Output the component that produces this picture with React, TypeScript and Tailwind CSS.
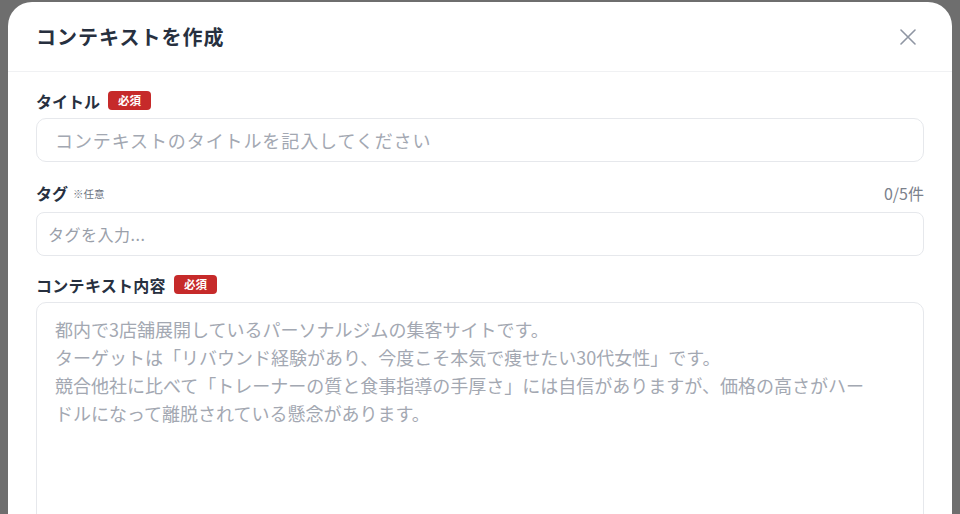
import { useState } from 'react';

const MAX_TAGS = 5;

const CONTENT_PLACEHOLDER =
  '都内で3店舗展開しているパーソナルジムの集客サイトです。\n' +
  'ターゲットは「リバウンド経験があり、今度こそ本気で痩せたい30代女性」です。\n' +
  '競合他社に比べて「トレーナーの質と食事指導の手厚さ」には自信がありますが、価格の高さがハー\n' +
  'ドルになって離脱されている懸念があります。';

function RequiredBadge() {
  return (
    <span className="ml-[8px] inline-flex h-[19px] items-center rounded-[4px] bg-[#c62a2a] px-[10px] text-[11.5px] font-bold leading-none text-white">
      必須
    </span>
  );
}

function CloseIcon() {
  return (
    <svg width="16" height="16" viewBox="0 0 16 16" fill="none" stroke="#8f96a3" strokeWidth="1.6" strokeLinecap="round">
      <path d="M1 1L15 15M15 1L1 15" />
    </svg>
  );
}

export default function App() {
  const [title, setTitle] = useState('');
  const [tagInput, setTagInput] = useState('');
  const [tags] = useState<string[]>([]);
  const [content, setContent] = useState('');

  return (
    <div
      className="h-[514px] w-[960px] overflow-hidden bg-[#6e6e6e] pl-[8px] pr-[8px] pt-[2px]"
      style={{ fontFamily: '"Noto Sans CJK JP", "Noto Sans", sans-serif' }}
    >
      <div className="flex h-full flex-col rounded-t-[24px] bg-white">
        {/* Header */}
        <div className="flex h-[70px] shrink-0 items-center justify-between border-b border-[#f0f1f3] pl-[28px] pr-[28px]">
          <h2 className="text-[20px] font-bold tracking-[1px] text-[#27303f]">コンテキストを作成</h2>
          <button className="p-[8px]">
            <CloseIcon />
          </button>
        </div>

        {/* Body */}
        <div className="flex flex-col px-[28px] pt-[19px]">
          {/* タイトル */}
          <div className="flex h-[19px] items-center">
            <span className="text-[16px] font-bold text-[#27303f]">タイトル</span>
            <RequiredBadge />
          </div>
          <input
            value={title}
            onChange={e => setTitle(e.target.value)}
            placeholder="コンテキストのタイトルを記入してください"
            className="mt-[8px] h-[44px] w-full rounded-[10px] border border-[#e6e8ec] px-[18px] text-[18px] tracking-[0.9px] text-[#27303f] outline-none placeholder:tracking-[0.9px] placeholder:text-[#a3a8b2]"
          />

          {/* タグ */}
          <div className="mt-[21px] flex h-[19px] items-center justify-between">
            <div className="flex items-center">
              <span className="text-[16px] font-bold text-[#27303f]">タグ</span>
              <span className="ml-[5px] mt-[2px] text-[10.5px] text-[#6b7280]">※任意</span>
            </div>
            <span className="text-[16px] text-[#7b818c]">
              {tags.length}/{MAX_TAGS}件
            </span>
          </div>
          <input
            value={tagInput}
            onChange={e => setTagInput(e.target.value)}
            placeholder="タグを入力..."
            className="mt-[10px] h-[44px] w-full rounded-[8px] border border-[#e6e8ec] px-[11px] text-[16px] tracking-[0.5px] text-[#27303f] outline-none placeholder:tracking-[0.5px] placeholder:text-[#9aa0aa]"
          />

          {/* コンテキスト内容 */}
          <div className="mt-[19px] flex h-[19px] items-center">
            <span className="text-[16px] font-bold tracking-[0.3px] text-[#27303f]">コンテキスト内容</span>
            <RequiredBadge />
          </div>
          <textarea
            value={content}
            onChange={e => setContent(e.target.value)}
            placeholder={CONTENT_PLACEHOLDER}
            className="mt-[8px] h-[260px] w-full resize-none rounded-[10px] border border-[#e6e8ec] pb-[12px] pl-[18px] pr-[10px] pt-[12px] text-[18px] leading-[28px] text-[#27303f] outline-none placeholder:text-[#a3a8b2]"
          />
        </div>
      </div>
    </div>
  );
}
